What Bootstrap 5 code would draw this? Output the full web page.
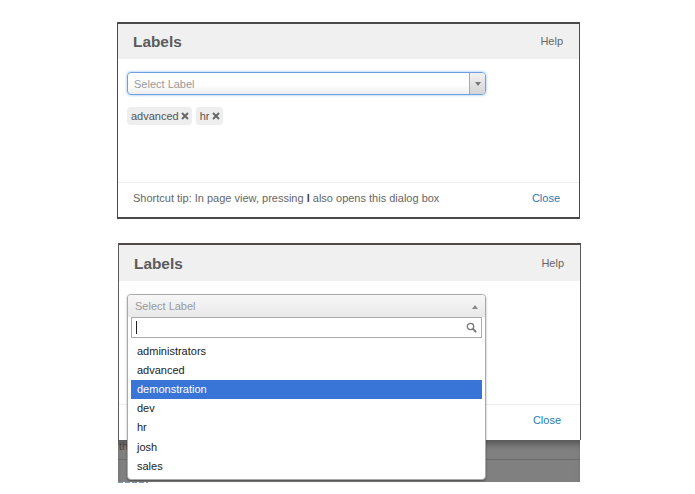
<!DOCTYPE html>
<html lang="en">
<head>
<meta charset="utf-8">
<title>Labels</title>
<link href="https://cdn.jsdelivr.net/npm/bootstrap@5.3.0/dist/css/bootstrap.min.css" rel="stylesheet">
<style>
html,body{background:#fff;height:494px;overflow:hidden}
body{font:11px/1.3 "Liberation Sans",Arial,sans-serif;color:#555;padding:22px 0 0 117px}
.shot{width:463px;background:#fff;border:2px solid #4a4a4a;border-left-width:1.5px;border-right-width:1.5px;height:197px}
.shot-two{margin:24px 0 0 1px;height:197px;position:relative;border-color:#5a5a5a;border-top-color:#4f4a48;border-bottom:0}
.dlg-head{height:35px;background:#f0f0f0;padding:0 16px 0 15px}
.shot-two .dlg-head{height:36px;padding-top:1px}
.dlg-title{font-size:15.4px;font-weight:700;color:#5b5b5b;margin:0;line-height:1}
.dlg-help{font-size:11px;color:#666}
.dlg-body{height:123px;padding:13px 9px 0}
.sel{width:359px;height:23px;border:1px solid #6f9fe0;border-radius:4px;background:linear-gradient(#fff 55%,#eee);box-shadow:0 0 3px #8fb8ee;overflow:hidden}
.sel-text{padding:1px 0 0 6px;color:#999}
.sel-arrow{width:16px;border-left:1px solid #aaa;background:linear-gradient(#f2f2f2,#d4d4d4)}
.tri-d{width:0;height:0;border:3px solid transparent;border-top:4px solid #777;border-bottom:0}
.tags{margin-top:12px;gap:4px}
.tagchip{height:18px;background:#eee;border-radius:4px;padding:0 3px 0 4px;color:#555;gap:1px}
.tag-x{margin-left:1px}
.dlg-foot{height:36px;border-top:1px solid #eee;padding:0 19px 4px 15px;color:#666}
.dlg-foot b{color:#444}
.close-link{color:#1f7ab5;text-decoration:none}
.backdrop{width:462px;height:42px;margin:0 0 0 -1px;background:#808080;position:relative;box-shadow:inset 0 7px 6px -3px #555}
.backdrop-line{height:1px;background:#6c6c6c;position:relative;top:19px}
.backdrop-th{position:absolute;left:1px;top:0;color:#444;font-size:11px;line-height:12px}
.under-mark{width:30px;height:1px;margin:0 0 0 -1px;background:repeating-linear-gradient(90deg,#7f98b0 0 5px,#fff 5px 7px)}
.drop{position:absolute;left:8px;top:49px;width:359px;height:186px;background:#fff;border:1px solid #aaa;border-radius:4px;box-shadow:0 1px 2px rgba(0,0,0,.4);z-index:5;overflow:hidden}
.drop-head{height:22px;padding:1px 7px 0;background:linear-gradient(#f7f7f7,#e8e8e8);color:#999}
.tri-u{width:0;height:0;border:3px solid transparent;border-bottom:4px solid #888;border-top:0}
.drop-search{height:21px;margin:0 3px;border:1px solid #aaa;background:#fff;padding:0 4px}
.caret-bar{width:1px;height:13px;background:#222}
.drop-list{margin:3.6px 3px 0;padding:0;list-style:none}
.drop-list li{height:19.2px;line-height:19.2px;padding-left:6px;color:#222}
.drop-list li.on{background:#3875d7;color:#fff}
</style>
</head>
<body>
<section class="shot">
  <header class="dlg-head d-flex align-items-center justify-content-between">
    <h2 class="dlg-title">Labels</h2><span class="dlg-help">Help</span>
  </header>
  <div class="dlg-body">
    <div class="sel d-flex justify-content-between">
      <span class="sel-text align-self-center">Select Label</span>
      <span class="sel-arrow d-flex align-items-center justify-content-center"><i class="tri-d"></i></span>
    </div>
    <div class="tags d-flex">
      <span class="tagchip d-flex align-items-center">advanced <svg class="tag-x" width="8" height="8" viewBox="0 0 8 8"><path d="M1 1l6 6M7 1L1 7" stroke="#666" stroke-width="1.9"/></svg></span>
      <span class="tagchip d-flex align-items-center">hr <svg class="tag-x" width="8" height="8" viewBox="0 0 8 8"><path d="M1 1l6 6M7 1L1 7" stroke="#666" stroke-width="1.9"/></svg></span>
    </div>
  </div>
  <footer class="dlg-foot d-flex align-items-center justify-content-between">
    <span>Shortcut tip: In page view, pressing <b>l</b> also opens this dialog box</span>
    <a class="close-link" href="#">Close</a>
  </footer>
</section>
<section class="shot shot-two">
  <header class="dlg-head d-flex align-items-center justify-content-between">
    <h2 class="dlg-title">Labels</h2><span class="dlg-help">Help</span>
  </header>
  <div class="dlg-body"></div>
  <footer class="dlg-foot d-flex align-items-center justify-content-between">
    <span></span>
    <a class="close-link" href="#">Close</a>
  </footer>
  <div class="drop">
    <div class="drop-head d-flex align-items-center justify-content-between"><span>Select Label</span><i class="tri-u"></i></div>
    <div class="drop-search d-flex align-items-center justify-content-between">
      <i class="caret-bar"></i>
      <svg width="11" height="11" viewBox="0 0 11 11" fill="none"><circle cx="4.5" cy="4.5" r="3.2" stroke="#777" stroke-width="1.3"/><path d="M7 7l3.2 3.2" stroke="#777" stroke-width="1.8"/></svg>
    </div>
    <ul class="drop-list">
      <li>administrators</li><li>advanced</li><li class="on">demonstration</li><li>dev</li><li>hr</li><li>josh</li><li>sales</li>
    </ul>
  </div>
  <div class="backdrop"><span class="backdrop-th">th</span><div class="backdrop-line"></div></div>
  <div class="under-mark"></div>
</section>
</body>
</html>
